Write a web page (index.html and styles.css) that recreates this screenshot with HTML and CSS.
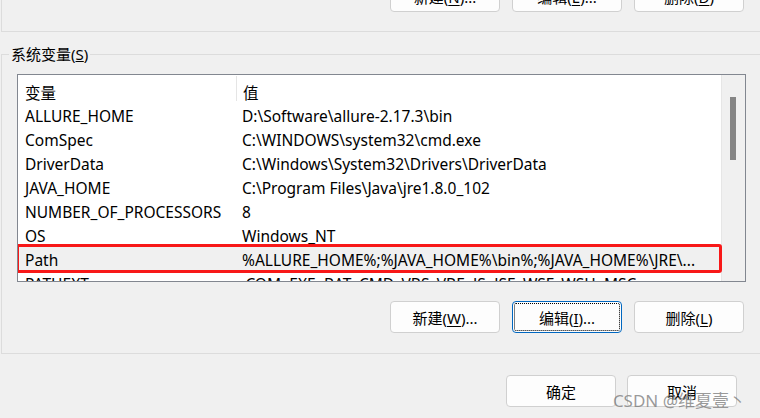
FILE: index.html
```html
<!DOCTYPE html>
<html lang="zh-CN">
<head>
    <meta charset="UTF-8">
    <title>环境变量</title>
    <link rel="stylesheet" href="styles.css">
</head>
<body>
    <div class="dialog">
        <div class="user-group">
            <div class="btn-row">
                <button class="btn">新建(<u>N</u>)...</button>
                <button class="btn">编辑(<u>E</u>)...</button>
                <button class="btn">删除(<u>D</u>)</button>
            </div>
        </div>

        <fieldset class="sys-group">
            <legend>系统变量(<u>S</u>)</legend>
            <div class="var-list">
                <div class="list-body">
                    <div class="list-head">
                        <div class="col-name">变量</div>
                        <div class="col-value">值</div>
                    </div>
                    <div class="list-row">
                        <div class="col-name">ALLURE_HOME</div>
                        <div class="col-value">D:\Software\allure-2.17.3\bin</div>
                    </div>
                    <div class="list-row">
                        <div class="col-name">ComSpec</div>
                        <div class="col-value">C:\WINDOWS\system32\cmd.exe</div>
                    </div>
                    <div class="list-row">
                        <div class="col-name">DriverData</div>
                        <div class="col-value">C:\Windows\System32\Drivers\DriverData</div>
                    </div>
                    <div class="list-row">
                        <div class="col-name">JAVA_HOME</div>
                        <div class="col-value">C:\Program Files\Java\jre1.8.0_102</div>
                    </div>
                    <div class="list-row">
                        <div class="col-name">NUMBER_OF_PROCESSORS</div>
                        <div class="col-value">8</div>
                    </div>
                    <div class="list-row">
                        <div class="col-name">OS</div>
                        <div class="col-value">Windows_NT</div>
                    </div>
                    <div class="list-row selected">
                        <div class="col-name">Path</div>
                        <div class="col-value">%ALLURE_HOME%;%JAVA_HOME%\bin%;%JAVA_HOME%\JRE\...</div>
                        <div class="mark"></div>
                    </div>
                    <div class="list-row">
                        <div class="col-name">PATHEXT</div>
                        <div class="col-value">.COM;.EXE;.BAT;.CMD;.VBS;.VBE;.JS;.JSE;.WSF;.WSH;.MSC</div>
                    </div>
                </div>
                <div class="scrollbar">
                    <div class="thumb"></div>
                </div>
            </div>
            <div class="btn-row">
                <button class="btn">新建(<u>W</u>)...</button>
                <button class="btn focused">编辑(<u>I</u>)...</button>
                <button class="btn">删除(<u>L</u>)</button>
            </div>
        </fieldset>

        <div class="dialog-actions">
            <button class="btn">确定</button>
            <button class="btn">取消</button>
        </div>

        <div class="watermark">CSDN @维夏壹丶</div>
    </div>
</body>
</html>
```

FILE: styles.css
```css
body {
    margin: 0;
    background-color: #f0f0f0;
    font-family: "Noto Sans", "Noto Sans CJK SC", sans-serif;
    font-size: 15px;
    color: #000;
    overflow: hidden;
}
.dialog {
    position: relative;
    display: flow-root;
    width: 760px;
    height: 418px;
}
.user-group {
    display: flow-root;
    margin-left: 1px;
    margin-right: -4px;
    height: 31px;
    border-left: 1px solid #dcdcdc;
    border-bottom: 1px solid #dcdcdc;
}
.user-group .btn-row {
    margin-top: -20px;
    padding-right: 20px;
}
.btn-row {
    display: flex;
    justify-content: flex-end;
    gap: 12px;
}
.btn {
    width: 110px;
    height: 32px;
    background-color: #fdfdfd;
    border: 1px solid #d0d0d0;
    border-radius: 4px;
    font-family: inherit;
    font-size: 15px;
    color: #000;
    padding: 0;
}
.btn u {
    text-decoration-thickness: 1px;
    text-underline-offset: 2px;
}
.btn.focused {
    border-color: #0067c0;
    outline: 1px dotted #000;
    outline-offset: -3px;
}
.sys-group {
    margin: 12px -4px 0 1px;
    padding: 0 0 20px 0;
    border: 1px solid #dcdcdc;
}
.sys-group legend {
    margin-left: 7px;
    padding: 0 2px;
    line-height: 20px;
}
.var-list {
    display: flex;
    margin: 10px 0 0 15px;
    width: 727px;
    height: 206px;
    border: 1px solid #828790;
    background-color: #fff;
    overflow: hidden;
    font-size: 15.5px;
}
.list-body {
    position: relative;
    flex: 1;
}
.list-head,
.list-row {
    display: flex;
    height: 24px;
    white-space: nowrap;
}
.list-row > div {
    padding-top: 2px;
    line-height: 22px;
}
.list-head {
    height: 28px;
    line-height: 20px;
}
.list-head .col-value {
    padding-top: 8px;
}
.list-head .col-name {
    border-right: 1px solid #e5e5e5;
    height: 18px;
    margin-top: 1px;
    padding-top: 7px;
}
.col-name {
    width: 211px;
    padding-left: 7px;
}
.col-value {
    flex: 1;
    padding-left: 6px;
    overflow: hidden;
}
.list-row.selected {
    position: relative;
    background-color: #f0f0f0;
}
.list-row > .mark {
    position: absolute;
    left: -2px;
    top: -3px;
    width: 700px;
    height: 23px;
    padding: 0;
    border: 3px solid #f81818;
    border-radius: 3px;
}
.scrollbar {
    width: 23px;
    background-color: #f0f0f0;
    border-left: 1px solid #e6e6e6;
}
.thumb {
    width: 6px;
    height: 63px;
    margin: 22px 0 0 8px;
    background-color: #858585;
}
.sys-group > .btn-row {
    margin-top: 19px;
    padding-right: 19px;
}
.dialog-actions {
    display: flex;
    justify-content: flex-end;
    gap: 11px;
    margin-top: 21px;
    padding-right: 23px;
}
.watermark {
    position: absolute;
    right: 14px;
    bottom: 6px;
    font-size: 17px;
    color: rgba(120, 120, 120, 0.75);
}
```
